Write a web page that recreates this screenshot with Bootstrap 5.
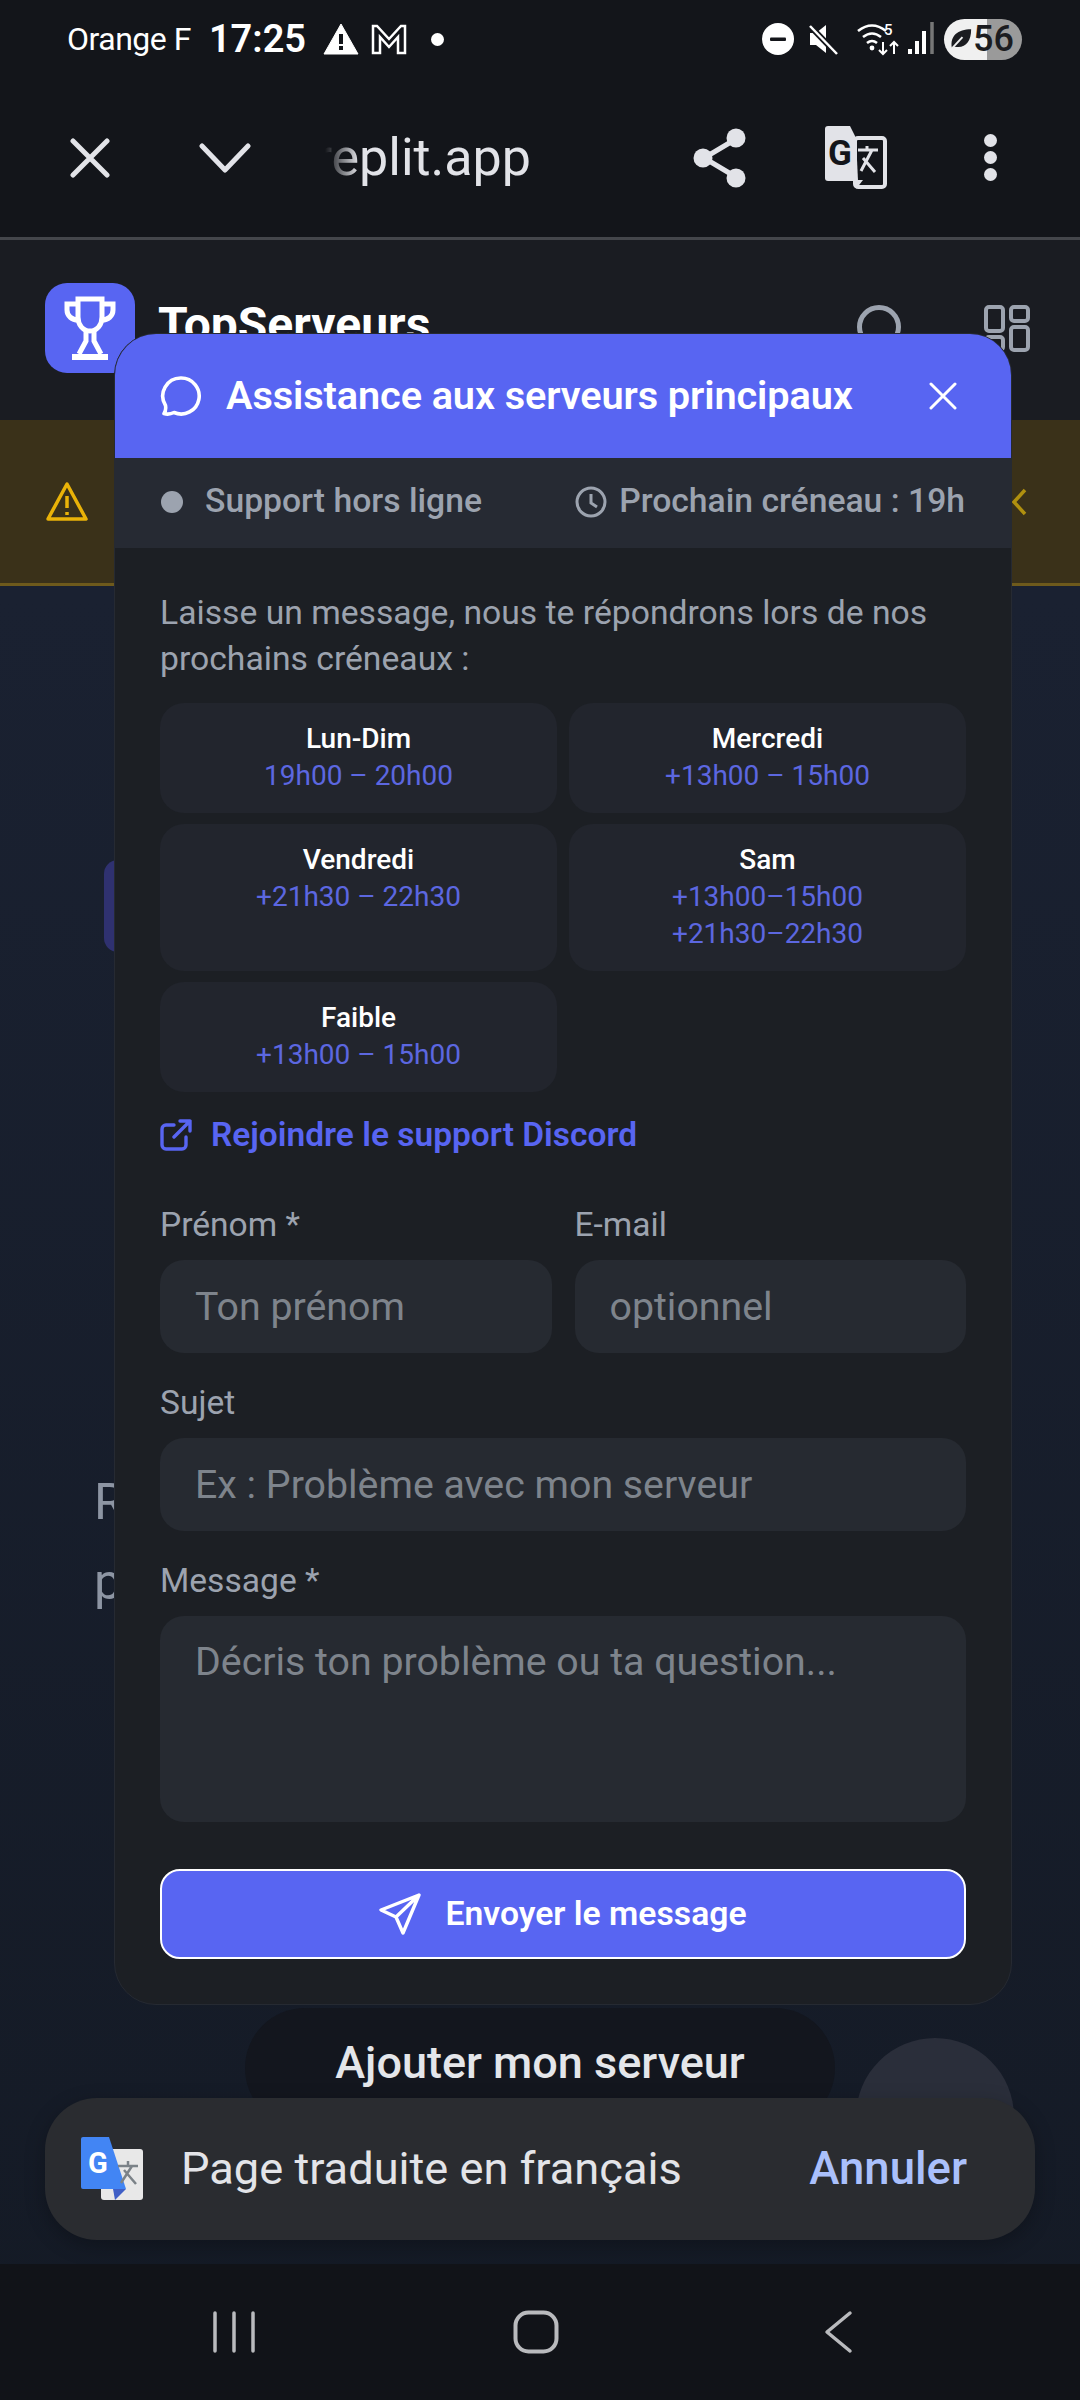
<!DOCTYPE html>
<html lang="fr">
<head>
  <meta charset="UTF-8" />
  <meta name="viewport" content="width=device-width, initial-scale=1.0"/>
  <title>TopServeurs - Assistance</title>
  <link href="https://cdn.jsdelivr.net/npm/bootstrap@5.3.0/dist/css/bootstrap.min.css" rel="stylesheet">
  <style>
    body { background: #111318; font-family: Roboto, "Liberation Sans", sans-serif; }
    .phone { position: relative; width: 1080px; height: 2400px; overflow: hidden; background: linear-gradient(180deg, #1a2131 0, #1a2131 25%, #141a25 100%); }
    .status-row { height: 78px; background: #13151a; color: #fff; padding: 0 58px 0 67px; }
    .carrier { font-size: 32px; letter-spacing: -.5px; margin-right: 18px; }
    .clock { font-size: 38px; font-weight: 600; margin-right: 17px; }
    .batt { width: 78px; height: 41px; border-radius: 21px; background: linear-gradient(90deg, #f0f0f0 0 55%, #9a9a9a 55%); color: #1b1c20; font-size: 36px; font-weight: 500; line-height: 41px; padding-right: 8px; }
    .tool-row { height: 162px; background: #13151a; border-bottom: 3px solid #44464b; padding: 0 83px 0 70px; color: #e2e3e8; }
    .url-txt { font-size: 52px; margin-left: 74px; width: 206px; color: #e2e3e8; white-space: nowrap; overflow: hidden; -webkit-mask-image: linear-gradient(90deg, transparent 0, #000 34px); mask-image: linear-gradient(90deg, transparent 0, #000 34px); }
    .site-head { height: 180px; background: #1a1c22; padding: 43px 50px 0 45px; }
    .logo-box { width: 90px; height: 90px; border-radius: 22px; background: #5865f2; }
    .site-name { font-size: 48px; font-weight: 700; color: #fff; margin-left: 23px; line-height: 84px; }
    .warn-band { height: 166px; background: #3a3119; border-bottom: 3px solid #6e5a1c; padding: 0 52px 0 45px; }
    .hero-bit { color: #8d95a3; font-size: 50px; line-height: 80px; padding-left: 94px; }
    .hero-tab { position: absolute; left: 104px; top: 860px; width: 30px; height: 92px; border-radius: 14px; background: #2f3170; }
    .sheet { position: absolute; left: 114px; top: 333px; width: 898px; height: 1672px; background: #1c1f24; border: 1px solid #262a32; border-radius: 42px; overflow: hidden; }
    .sheet-top { height: 124px; background: #5865f2; padding: 0 54px 0 45px; color: #fff; }
    .sheet-title { font-size: 39.7px; font-weight: 600; margin-left: 24px; letter-spacing: -.1px; }
    .sheet-state { height: 90px; background: #262a33; padding: 0 46px 3px; color: #9ca3af; font-size: 33.7px; font-weight: 500; }
    .state-dot { width: 22px; height: 22px; border-radius: 50%; background: #9ca3af; margin-right: 22px; }
    .clock-ico { margin-right: 12px; }
    .sheet-body { padding: 42px 45px 0; }
    .intro-txt { font-size: 33.7px; line-height: 46px; color: #9ca3af; margin: 0 0 21px; }
    .slot-grid { display: grid; grid-template-columns: 1fr 1fr; gap: 11px 12px; }
    .slot-box { background: #22252d; border-radius: 24px; text-align: center; padding: 17px 8px 19px; font-size: 28px; line-height: 37px; }
    .slot-day { color: #fff; font-weight: 500; }
    .slot-time { color: #5c67e0; }
    .join-link { color: #5865f2; font-size: 33.5px; font-weight: 600; text-decoration: none; margin: 22px 0 49px; height: 42px; gap: 19px; }
    .fld-row { margin-bottom: 30px; }
    .fld-label { color: #9ca3af; font-size: 33.6px; line-height: 40px; margin-bottom: 15px; display: block; }
    .fld-input.form-control { background: #262a31; border: 0; border-radius: 24px; height: 93px; padding: 0 35px; font-size: 39.3px; color: #fff; }
    .fld-input.form-control::placeholder { color: #7e848c; opacity: 1; }
    textarea.fld-input.form-control { height: 206px; padding-top: 24px; resize: none; line-height: 44px; }
    .send-btn.btn { height: 90px; width: 100%; margin-top: 47px; background: #5865f2; border: 2px solid #fff; border-radius: 20px; color: #fff; font-size: 33.7px; font-weight: 600; }
    .add-pill { position: absolute; left: 245px; top: 2008px; width: 590px; height: 120px; border-radius: 60px; background: #13161e; color: #e4e6ea; font-size: 45px; font-weight: 500; padding-top: 21px; text-align: center; }
    .fab-round { position: absolute; left: 856px; top: 2038px; width: 158px; height: 158px; border-radius: 50%; background: #2a2e3a; }
    .toast-bar { position: absolute; left: 45px; top: 2098px; width: 990px; height: 142px; border-radius: 52px; background: #2a2c30; padding: 0 68px 0 36px; box-shadow: 0 6px 20px rgba(0,0,0,.25); }
    .toast-msg { color: #e3e4e8; font-size: 45.2px; margin-left: 38px; }
    .toast-undo { color: #aac0fb; font-size: 45.5px; font-weight: 500; }
    .nav-row { position: absolute; left: 0; right: 0; bottom: 0; height: 136px; background: #111318; }
  </style>
</head>
<body class="m-0">
<div class="phone d-flex flex-column">

  <!-- android status bar -->
  <div class="status-row d-flex align-items-center">
    <span class="carrier">Orange F</span>
    <span class="clock">17:25</span>
    <svg width="36" height="32" viewBox="0 0 36 32"><path d="M18 1 35 31H1z" fill="#fff" stroke="#fff" stroke-linejoin="round"/><rect x="16" y="11" width="4" height="10" fill="#13151a"/><rect x="16" y="23" width="4" height="4" fill="#13151a"/></svg>
    <svg width="36" height="32" viewBox="0 0 36 32" style="margin-left:12px"><path d="M2 30V3h4l12 13L30 3h4v27h-7V14l-9 10-9-10v16z" fill="none" stroke="#fff" stroke-width="2.5"/></svg>
    <span class="rounded-circle bg-white ms-4" style="width:13px;height:13px"></span>
    <div class="ms-auto d-flex align-items-center">
      <svg width="32" height="32" viewBox="0 0 32 32"><circle cx="16" cy="16" r="16" fill="#fff"/><rect x="8" y="14.500" width="16" height="3.500" rx="1" fill="#13151a"/></svg>
      <svg width="30" height="32" viewBox="0 0 30 32" style="margin-left:15px"><path d="M1 10h6l10-8v28l-10-8H1z" fill="#fff"/><path d="M1 3l27 28" stroke="#13151a" stroke-width="6"/><path d="M1 3l27 28" stroke="#fff" stroke-width="2.500"/></svg>
      <svg width="80" height="36" viewBox="0 0 80 36" style="margin-left:17px">
        <path d="M2 10q14-11 28 0M7 16q9-7 18 0M11 22q5-4 10 0" fill="none" stroke="#fff" stroke-width="2.600"/><circle cx="16" cy="27" r="2.400" fill="#fff"/>
        <text x="28" y="14" font-size="15" font-weight="500" fill="#fff" font-family="Roboto">5</text>
        <path d="M27 21v12M23 29l4 4 4-4M38 33V21M34 25l4-4 4 4" fill="none" stroke="#fff" stroke-width="2"/>
        <path d="M54 33v-5M61 33V20M68 33V10" stroke="#fff" stroke-width="4"/><path d="M76 33V1" stroke="#777" stroke-width="3.500"/>
      </svg>
      <div class="batt d-flex align-items-center justify-content-between ms-2 ps-1">
        <svg width="26" height="26" viewBox="0 0 26 26"><path d="M4 22C2 10 10 3 24 3c0 13-6 20-17 18" fill="#1b1c20"/><path d="M2 25 15 11" stroke="#f0f0f0" stroke-width="2"/></svg>
        <span>56</span>
      </div>
    </div>
  </div>

  <!-- custom tab toolbar -->
  <div class="tool-row d-flex align-items-center">
    <svg width="40" height="40" viewBox="0 0 40 40"><path d="M3 3l34 34M37 3 3 37" stroke="#e2e3e8" stroke-width="5" stroke-linecap="round"/></svg>
    <svg width="52" height="30" viewBox="0 0 52 30" style="margin-left:89px"><path d="M3 3l23 24L49 3" fill="none" stroke="#e2e3e8" stroke-width="5" stroke-linecap="round" stroke-linejoin="round"/></svg>
    <div class="url-txt d-flex justify-content-end"><span>replit.app</span></div>
    <div class="ms-auto d-flex align-items-center">
      <svg width="54" height="60" viewBox="0 0 54 60"><path d="M43 11 11 30l32 19" fill="none" stroke="#e2e3e8" stroke-width="5"/><circle cx="43" cy="10" r="9.500" fill="#e2e3e8"/><circle cx="10" cy="30" r="9.500" fill="#e2e3e8"/><circle cx="43" cy="50" r="9.500" fill="#e2e3e8"/></svg>
      <svg width="62" height="64" viewBox="0 0 62 64" style="margin-left:78px">
        <rect x="30" y="12" width="30" height="49" rx="3" fill="#13151a" stroke="#e2e3e8" stroke-width="4"/>
        <path d="M3 0h22l6 12 2 43H3a3 3 0 0 1-3-3V3a3 3 0 0 1 3-3z" fill="#e2e3e8"/>
        <path d="M31 54h7l-7 9z" fill="#e2e3e8"/>
        <text x="3" y="39" font-size="35" font-weight="700" fill="#13151a" font-family="Roboto">G</text>
        <path d="M33 24h20M42 20v4M36 45l11-21M38 32l12 14" stroke="#e2e3e8" stroke-width="3" fill="none"/>
      </svg>
      <div class="d-flex flex-column gap-1" style="margin-left:97px">
        <span class="rounded-circle" style="width:13px;height:13px;background:#e2e3e8"></span>
        <span class="rounded-circle" style="width:13px;height:13px;background:#e2e3e8"></span>
        <span class="rounded-circle" style="width:13px;height:13px;background:#e2e3e8"></span>
      </div>
    </div>
  </div>

  <!-- page behind the dialog -->
  <div class="site-head d-flex align-items-start">
    <div class="logo-box d-flex align-items-center justify-content-center">
      <svg width="52" height="66" viewBox="0 0 52 66" fill="none" stroke="#fff" stroke-width="5"><path d="M14 4h24v18c0 8-5 14-12 14S14 30 14 22z"/><path d="M14 9H3v6c0 6 5 10 11 10M38 9h11v6c0 6-5 10-11 10"/><path d="M22 36v10l-7 13M30 36v10l7 13"/><path d="M8 62h36" stroke-width="6"/></svg>
    </div>
    <span class="site-name">TopServeurs</span>
    <div class="ms-auto d-flex align-items-start" style="padding-top:22px;gap:83px">
      <svg width="44" height="44" viewBox="0 0 44 44"><circle cx="22" cy="22" r="19.500" fill="none" stroke="#9ca3af" stroke-width="5"/></svg>
      <svg width="46" height="47" viewBox="0 0 46 47" fill="none" stroke="#9ca3af" stroke-width="4"><rect x="2" y="2" width="17" height="24" rx="3"/><rect x="27" y="2" width="17" height="14" rx="3"/><rect x="27" y="22" width="17" height="23" rx="3"/><rect x="2" y="32" width="17" height="13" rx="3"/></svg>
    </div>
  </div>
  <div class="warn-band d-flex align-items-center justify-content-between">
    <svg width="44" height="42" viewBox="0 0 44 42" fill="none" stroke="#eab308" stroke-width="3.500" stroke-linejoin="round"><path d="M22 3 41 38H3z"/><path d="M22 15v12M22 31v3"/></svg>
    <svg width="18" height="30" viewBox="0 0 18 30"><path d="M15 3 4 15l11 12" fill="none" stroke="#b0900f" stroke-width="3.500"/></svg>
  </div>
  <div class="flex-grow-1" style="padding-top:876px">
    <div class="hero-bit">R<br>p</div>
  </div>
  <div class="hero-tab"></div>

  <div class="add-pill">Ajouter mon serveur</div>
  <div class="fab-round"></div>

  <!-- support dialog -->
  <div class="sheet">
    <div class="sheet-top d-flex align-items-center">
      <svg width="42" height="42" viewBox="0 0 42 42" fill="none" stroke="#fff" stroke-width="3.600" stroke-linejoin="round"><path d="M21 3a18 18 0 1 1-7 34.500c-3 1.500-7 2-10 1 1.500-2 2-5 1.500-8A18 18 0 0 1 21 3z"/></svg>
      <span class="sheet-title">Assistance aux serveurs principaux</span>
      <svg width="28" height="28" viewBox="0 0 28 28" class="ms-auto"><path d="M2 2l24 24M26 2 2 26" stroke="#fff" stroke-width="3" stroke-linecap="round"/></svg>
    </div>
    <div class="sheet-state d-flex align-items-center">
      <span class="state-dot"></span>
      <span>Support hors ligne</span>
      <svg width="32" height="32" viewBox="0 0 32 32" fill="none" stroke="#9ca3af" stroke-width="3" class="ms-auto clock-ico"><circle cx="16" cy="16" r="14"/><path d="M16 8v9l6 4"/></svg>
      <span>Prochain créneau : 19h</span>
    </div>
    <div class="sheet-body">
      <p class="intro-txt">Laisse un message, nous te répondrons lors de nos prochains créneaux :</p>
      <div class="slot-grid">
        <div class="slot-box"><div class="slot-day">Lun-Dim</div><div class="slot-time">19h00 – 20h00</div></div>
        <div class="slot-box"><div class="slot-day">Mercredi</div><div class="slot-time">+13h00 – 15h00</div></div>
        <div class="slot-box"><div class="slot-day">Vendredi</div><div class="slot-time">+21h30 – 22h30</div></div>
        <div class="slot-box"><div class="slot-day">Sam</div><div class="slot-time">+13h00–15h00</div><div class="slot-time">+21h30–22h30</div></div>
        <div class="slot-box"><div class="slot-day">Faible</div><div class="slot-time">+13h00 – 15h00</div></div>
      </div>
      <a href="#" class="join-link d-flex align-items-center">
        <svg width="32" height="32" viewBox="0 0 32 32" fill="none" stroke="#5865f2" stroke-width="3.400" stroke-linecap="round" stroke-linejoin="round"><path d="M14 6H6a4 4 0 0 0-4 4v16a4 4 0 0 0 4 4h16a4 4 0 0 0 4-4v-8"/><path d="M20 2h10v10M30 2 14 18"/></svg>
        Rejoindre le support Discord
      </a>
      <form>
        <div class="d-flex fld-row" style="gap:23px">
          <div class="flex-fill w-50">
            <label class="fld-label">Prénom *</label>
            <input class="form-control fld-input" placeholder="Ton prénom">
          </div>
          <div class="flex-fill w-50">
            <label class="fld-label">E-mail</label>
            <input class="form-control fld-input" placeholder="optionnel">
          </div>
        </div>
        <div class="fld-row">
          <label class="fld-label">Sujet</label>
          <input class="form-control fld-input" placeholder="Ex : Problème avec mon serveur">
        </div>
        <label class="fld-label">Message *</label>
        <textarea class="form-control fld-input" placeholder="Décris ton problème ou ta question..."></textarea>
        <button type="button" class="btn send-btn d-flex align-items-center justify-content-center gap-4">
          <svg width="42" height="42" viewBox="0 0 42 42" fill="none" stroke="#fff" stroke-width="3.400" stroke-linejoin="round"><path d="M40 2 2 17l15 7 7 16zM17 24 40 2"/></svg>
          Envoyer le message
        </button>
      </form>
    </div>
  </div>

  <!-- chrome translate toast -->
  <div class="toast-bar d-flex align-items-center">
    <svg width="62" height="64" viewBox="0 0 62 64">
      <rect x="20" y="12" width="42" height="51" rx="3" fill="#e8e8e8"/>
      <path d="M32 52h13L34 63z" fill="#3f5fc6"/>
      <path d="M2 0h26l17 52H2a2 2 0 0 1-2-2V2a2 2 0 0 1 2-2z" fill="#4285f4"/>
      <text x="7" y="36" font-size="29" font-weight="700" fill="#fff" font-family="Roboto">G</text>
      <path d="M37 29h20M47 24v5M40 46l11-17M43 33l12 14" stroke="#7b8288" stroke-width="2.500" fill="none"/>
    </svg>
    <span class="toast-msg">Page traduite en français</span>
    <span class="toast-undo ms-auto">Annuler</span>
  </div>

  <!-- android nav bar -->
  <div class="nav-row d-flex align-items-center">
    <svg width="44" height="42" viewBox="0 0 44 42" style="margin-left:212px"><path d="M3 2v38M22 2v38M41 2v38" stroke="#b9babd" stroke-width="3.500" stroke-linecap="round"/></svg>
    <svg width="46" height="44" viewBox="0 0 46 44" style="margin-left:257px"><rect x="2.500" y="2.500" width="41" height="39" rx="13" fill="none" stroke="#b9babd" stroke-width="4"/></svg>
    <svg width="30" height="44" viewBox="0 0 30 44" style="margin-left:264px"><path d="M27 3 4 22l23 19" fill="none" stroke="#b9babd" stroke-width="3.500" stroke-linecap="round" stroke-linejoin="round"/></svg>
  </div>
</div>
<script src="https://cdn.jsdelivr.net/npm/bootstrap@5.3.0/dist/js/bootstrap.bundle.min.js"></script>
</body>
</html>
